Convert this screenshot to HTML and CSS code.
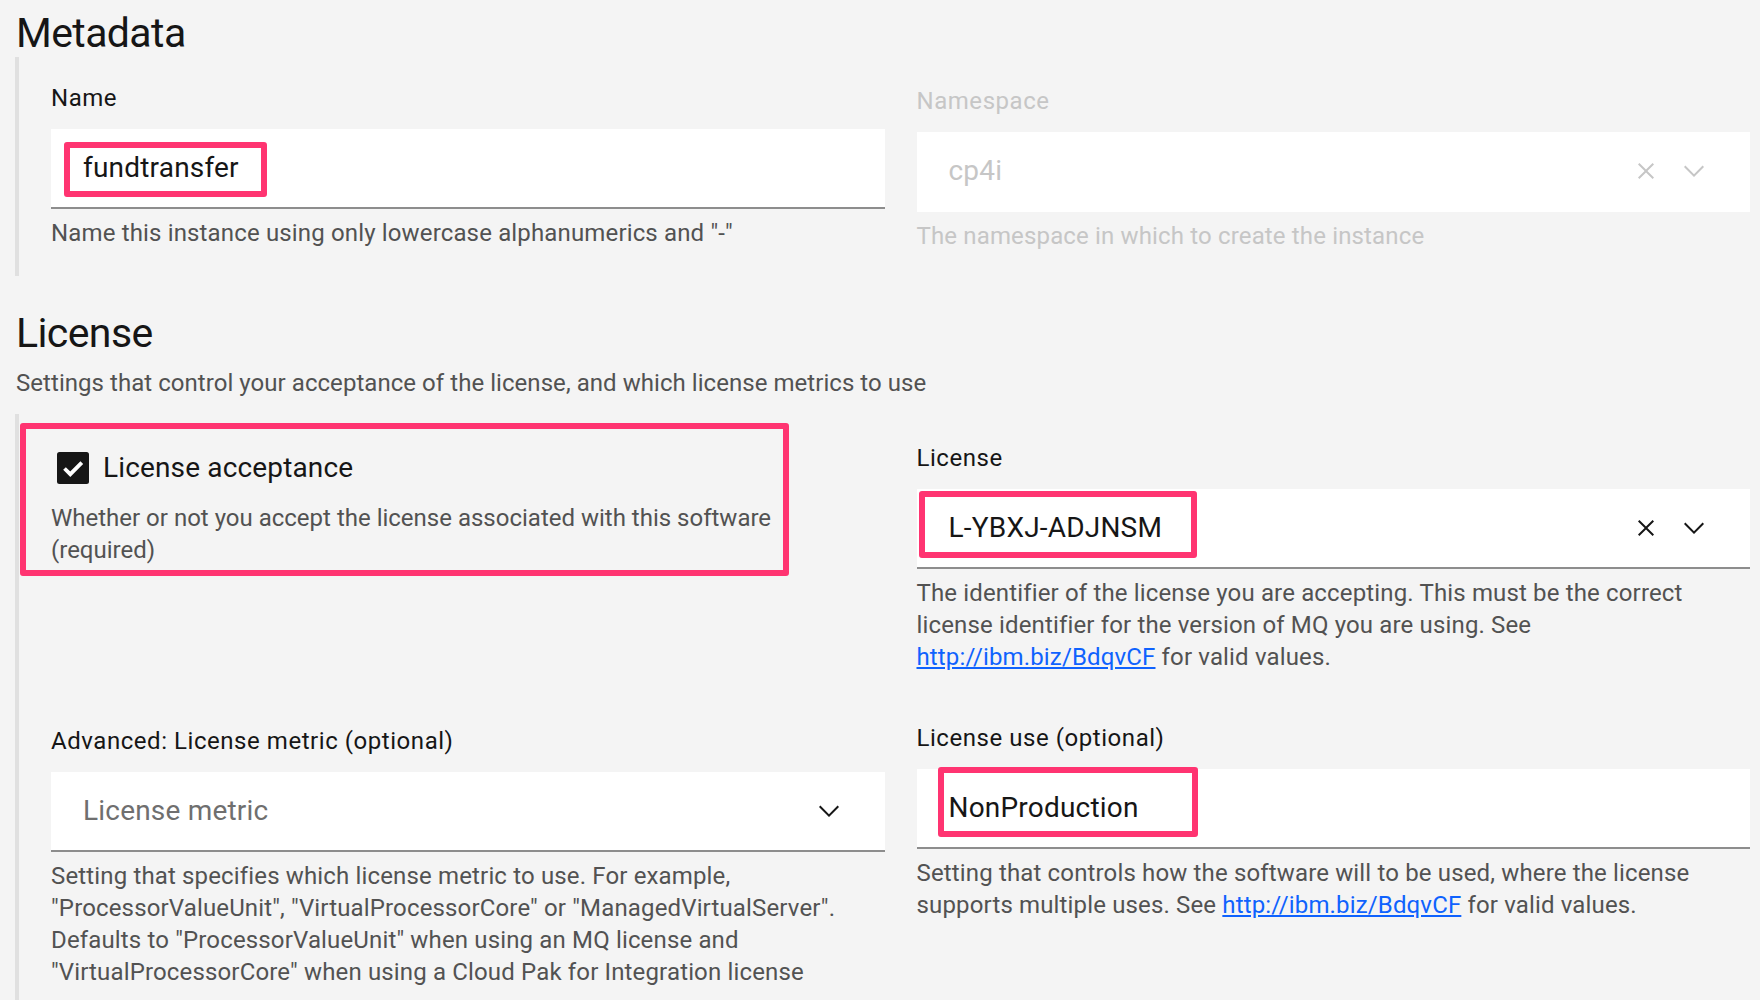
FILE: index.html
```html
<!DOCTYPE html>
<html lang="en">
<head>
<meta charset="utf-8">
<title>Metadata and License</title>
<link rel="stylesheet" href="styles.css">
</head>
<body>
<main class="page">
  <h2 class="section-title title-meta">Metadata</h2>
  <section class="group group-meta">
    <div class="grid">
      <div class="field">
        <div class="label">Name</div>
        <div class="input">
          <span class="value">fundtransfer</span>
          <span class="hl hl-name"></span>
        </div>
        <div class="helper">Name this instance using only lowercase alphanumerics and "-"</div>
      </div>
      <div class="field field-disabled field-ns">
        <div class="label">Namespace</div>
        <div class="input">
          <span class="value">cp4i</span>
          <span class="icons">
            <svg class="icon" viewBox="0 0 16 16" width="32" height="32"><path d="M12 4.7L11.3 4 8 7.3 4.7 4 4 4.7 7.3 8 4 11.3 4.7 12 8 8.7 11.3 12 12 11.3 8.7 8z"/></svg>
            <svg class="icon" viewBox="0 0 16 16" width="32" height="32"><path d="M8 11L3 6 3.7 5.3 8 9.6 12.3 5.3 13 6z"/></svg>
          </span>
        </div>
        <div class="helper">The namespace in which to create the instance</div>
      </div>
    </div>
  </section>

  <h2 class="section-title title-license">License</h2>
  <p class="section-desc">Settings that control your acceptance of the license, and which license metrics to use</p>
  <section class="group group-license">
    <div class="grid grid-license">
      <div class="field field-check">
        <div class="checkbox-row">
          <svg class="checkbox" viewBox="0 0 32 32" width="32" height="32"><rect x="0" y="0" width="32" height="32" rx="2.5" fill="#161616"/><polyline points="7.5,16.5 13.3,22.2 24.8,10.6" fill="none" stroke="#ffffff" stroke-width="3.8"/></svg>
          <span class="checkbox-label">License acceptance</span>
        </div>
        <div class="helper helper-check">Whether or not you accept the license associated with this software (required)</div>
        <span class="hl hl-check"></span>
      </div>
      <div class="field">
        <div class="label">License</div>
        <div class="input">
          <span class="value">L-YBXJ-ADJNSM</span>
          <span class="icons">
            <svg class="icon" viewBox="0 0 16 16" width="32" height="32"><path d="M12 4.7L11.3 4 8 7.3 4.7 4 4 4.7 7.3 8 4 11.3 4.7 12 8 8.7 11.3 12 12 11.3 8.7 8z"/></svg>
            <svg class="icon" viewBox="0 0 16 16" width="32" height="32"><path d="M8 11L3 6 3.7 5.3 8 9.6 12.3 5.3 13 6z"/></svg>
          </span>
          <span class="hl hl-license"></span>
        </div>
        <div class="helper">The identifier of the license you are accepting. This must be the correct license identifier for the version of MQ you are using. See <a class="link" href="#">http://ibm.biz/BdqvCF</a> for valid values.</div>
      </div>
      <div class="field field-metric">
        <div class="label">Advanced: License metric (optional)</div>
        <div class="input select">
          <span class="value placeholder">License metric</span>
          <span class="icons">
            <svg class="icon" viewBox="0 0 16 16" width="32" height="32"><path d="M8 11L3 6 3.7 5.3 8 9.6 12.3 5.3 13 6z"/></svg>
          </span>
        </div>
        <div class="helper">Setting that specifies which license metric to use. For example, "ProcessorValueUnit", "VirtualProcessorCore" or "ManagedVirtualServer". Defaults to "ProcessorValueUnit" when using an MQ license and "VirtualProcessorCore" when using a Cloud Pak for Integration license</div>
      </div>
      <div class="field">
        <div class="label">License use (optional)</div>
        <div class="input">
          <span class="value">NonProduction</span>
          <span class="hl hl-use"></span>
        </div>
        <div class="helper"><span>Setting that controls how the software will to be used, where the license</span> <span>supports multiple uses. See</span> <a class="link" href="#">http://ibm.biz/BdqvCF</a> <span>for valid values.</span></div>
      </div>
    </div>
  </section>
</main>
</body>
</html>
```

FILE: styles.css
```css
html, body {
  margin: 0;
  padding: 0;
  background: #f4f4f4;
}

body {
  font-family: Roboto, "Liberation Sans", Arial, sans-serif;
  color: #161616;
  overflow: hidden;
}

.page {
  padding-top: 10px;
  width: 1760px;
  height: 1000px;
  box-sizing: border-box;
  overflow: hidden;
}

.section-title {
  margin: 0 0 0 16px;
  font-size: 41px;
  line-height: 47px;
  font-weight: 400;
  letter-spacing: -0.6px;
  color: #161616;
}

.title-license {
  margin-top: 34px;
}

.section-desc {
  margin: 10px 0 0 16px;
  font-size: 24px;
  line-height: 32px;
  letter-spacing: 0.05px;
  color: #525252;
}

.group {
  margin: 0 10px 0 15px;
  border-left: 4px solid #e0e0e0;
  padding-left: 32px;
}

.group-meta {
  padding-top: 25px;
  padding-bottom: 24px;
}

.group-license {
  margin-top: 15px;
  padding-top: 28px;
  padding-bottom: 60px;
}

.grid {
  display: grid;
  grid-template-columns: 1fr 1fr;
  column-gap: 32px;
  align-items: start;
}

.grid-license {
  row-gap: 49px;
}

.field {
  position: relative;
  display: flex;
  flex-direction: column;
}

.field-ns {
  margin-top: 3px;
}

.field-metric {
  margin-top: 3px;
}

.label {
  font-size: 24px;
  line-height: 32px;
  letter-spacing: 0.55px;
  color: #161616;
  margin-bottom: 15px;
}

.input {
  position: relative;
  display: flex;
  align-items: center;
  height: 80px;
  box-sizing: border-box;
  background: #ffffff;
  border-bottom: 2px solid #8d8d8d;
  padding-left: 32px;
  font-size: 28px;
  line-height: 36px;
  letter-spacing: 0.2px;
  color: #161616;
}

.value {
  white-space: nowrap;
}

.placeholder {
  color: #6f6f6f;
}

.icons {
  display: flex;
  align-items: center;
  gap: 16px;
  margin-left: auto;
  margin-right: 40px;
}

.icon {
  display: block;
  fill: #161616;
}

.helper {
  margin-top: 8px;
  font-size: 24px;
  line-height: 32px;
  letter-spacing: 0.15px;
  color: #525252;
}

.field-disabled .label,
.field-disabled .helper,
.field-disabled .value {
  color: #c6c6c6;
}

.field-disabled .input {
  border-bottom-color: transparent;
}

.field-disabled .icon {
  fill: #c6c6c6;
}

.link {
  color: #0f62fe;
  text-decoration: underline;
}

.checkbox-row {
  display: flex;
  align-items: center;
  height: 40px;
  margin-top: 6px;
  padding-left: 6px;
}

.checkbox {
  display: block;
  flex: none;
}

.checkbox-label {
  margin-left: 14px;
  font-size: 28px;
  line-height: 40px;
  letter-spacing: 0.15px;
  color: #161616;
}

.helper-check {
  margin-top: 14px;
  max-width: 760px;
  letter-spacing: 0;
}

.hl {
  position: absolute;
  box-sizing: border-box;
  border: 6px solid #ff3471;
  border-radius: 3px;
  pointer-events: none;
}

.hl-name {
  left: 13px;
  top: 13px;
  width: 203px;
  height: 55px;
}

.hl-license {
  left: 2px;
  top: 2px;
  width: 278px;
  height: 67px;
}

.hl-use {
  left: 21px;
  top: -2px;
  width: 260px;
  height: 70px;
}

.hl-check {
  left: -31px;
  top: -19px;
  width: 769px;
  height: 153px;
}
```
